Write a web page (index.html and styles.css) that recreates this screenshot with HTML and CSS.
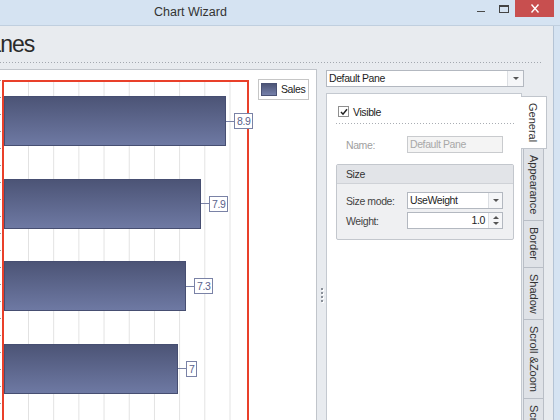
FILE: index.html
```html
<!DOCTYPE html>
<html>
<head>
<meta charset="utf-8">
<title>Chart Wizard</title>
<link rel="stylesheet" href="styles.css">
</head>
<body>
<div class="window">
  <div class="titlebar">
    <span class="title">Chart Wizard</span>
    <div class="win-controls">
      <span class="btn-min"></span>
      <span class="btn-max"></span>
      <span class="btn-close"><svg width="10" height="9" viewBox="0 0 10 9"><path d="M1.5 0.5 L8.5 8.5 M8.5 0.5 L1.5 8.5" stroke="#fff" stroke-width="1.4" fill="none"/></svg></span>
    </div>
  </div>
  <div class="frame">
    <div class="body">
      <div class="header"><h1 class="heading">Panes</h1></div>
      <div class="content">
        <div class="chart-panel">
          <div class="axis"></div>
          <div class="plot">
            <div class="bar-row"><div class="bar" style="width:222px"></div><span class="connector"></span><span class="value">8.9</span></div>
            <div class="bar-row"><div class="bar" style="width:197px"></div><span class="connector"></span><span class="value">7.9</span></div>
            <div class="bar-row"><div class="bar" style="width:182px"></div><span class="connector"></span><span class="value">7.3</span></div>
            <div class="bar-row"><div class="bar" style="width:174px"></div><span class="connector"></span><span class="value">7</span></div>
          </div>
          <div class="legend"><span class="swatch"></span><span>Sales</span></div>
        </div>
        <div class="splitter"><span class="grip"></span><span class="grip"></span><span class="grip"></span><span class="grip"></span></div>
        <div class="props">
          <div class="combo main-combo"><span class="combo-text">Default Pane</span><span class="combo-btn"><i class="arrow-down"></i></span></div>
          <div class="tabs">
            <div class="tab-page">
              <div class="check-row">
                <span class="checkbox"><svg width="8" height="8" viewBox="0 0 8 8"><path d="M1 4 L3 6.2 L7 1.2" stroke="#222" stroke-width="1.5" fill="none"/></svg></span>
                <span>Visible</span>
              </div>
              <div class="sep"></div>
              <div class="field-row name-row"><span class="field-label disabled">Name:</span><span class="textbox">Default Pane</span></div>
              <div class="group">
                <div class="group-head">Size</div>
                <div class="group-body">
                  <div class="field-row"><span class="field-label">Size mode:</span><span class="combo field"><span class="combo-text">UseWeight</span><span class="combo-btn small"><i class="arrow-down"></i></span></span></div>
                  <div class="field-row"><span class="field-label">Weight:</span><span class="combo field"><span class="combo-text num">1.0</span><span class="spin-btn"><i class="arrow-up"></i><i class="arrow-down"></i></span></span></div>
                </div>
              </div>
            </div>
            <div class="tab-strip">
              <div class="tab active">General</div>
              <div class="tab">Appearance</div>
              <div class="tab">Border</div>
              <div class="tab">Shadow</div>
              <div class="tab">Scroll &amp;Zoom</div>
              <div class="tab">Scroll Bar</div>
            </div>
          </div>
        </div>
      </div>
    </div>
  </div>
</div>
</body>
</html>
```

FILE: styles.css
```css
html, body {
  margin: 0;
  overflow: hidden;
}
body {
  font-family: "Liberation Sans", Arial, sans-serif;
  font-size: 10.5px;
  letter-spacing: -0.4px;
  color: #222;
}
.window {
  width: 560px;
  height: 530px;
  background: #d5e3f2;
  display: flex;
  flex-direction: column;
}
.titlebar {
  height: 26px;
  flex: none;
  box-sizing: border-box;
  border-bottom: 1px solid #c0cfdf;
  display: flex;
  align-items: flex-start;
}
.title {
  font-size: 12.5px;
  letter-spacing: 0;
  line-height: 15px;
  margin: 5px 0 0 154px;
  color: #333;
}
.win-controls {
  margin-left: auto;
  margin-right: 6px;
  display: flex;
  align-items: flex-start;
}
.btn-min {
  width: 8px;
  height: 1px;
  background: #4a4a4a;
  margin: 11px 14px 0 0;
}
.btn-max {
  width: 8px;
  height: 5px;
  border: 1px solid #444;
  border-top-width: 2px;
  margin: 5px 6px 0 0;
}
.btn-close {
  width: 39px;
  height: 17px;
  background: #c84f4f;
  display: flex;
  align-items: center;
  justify-content: center;
}
.frame {
  flex: 1;
  display: flex;
  min-height: 0;
  padding-right: 6px;
}
.body {
  flex: 1;
  background: #e8ebef;
  border-right: 1px solid #b4c3d5;
  display: flex;
  flex-direction: column;
  overflow: hidden;
}
.header {
  height: 37px;
  flex: none;
  margin-right: 10px;
  background: linear-gradient(to right, #a3a8af 1px, transparent 1px) left bottom / 3px 1px repeat-x;
  overflow: hidden;
}
.heading {
  margin: 0 0 0 -26px;
  font-size: 23px;
  letter-spacing: -1px;
  font-weight: normal;
  line-height: 36px;
  color: #2a2a2a;
  white-space: nowrap;
}
.content {
  flex: 1;
  display: flex;
  margin-top: 6px;
  min-height: 0;
}
.chart-panel {
  width: 317px;
  flex: none;
  box-sizing: border-box;
  background: #fff;
  border-top: 1px solid #c1c5cb;
  border-right: 1px solid #c1c5cb;
  display: flex;
  align-items: flex-start;
  padding-top: 10px;
}
.axis {
  width: 1px;
  margin-right: 1px;
  align-self: stretch;
  background: repeating-linear-gradient(to bottom, #9a9a9a 0 1px, transparent 1px 17px);
}
.plot {
  width: 247px;
  height: 460px;
  flex: none;
  box-sizing: border-box;
  border: 2px solid #e9402a;
  padding-top: 14px;
  display: flex;
  flex-direction: column;
  gap: 32.5px;
  background-image: linear-gradient(to right, #e2e2e2 1px, transparent 1px);
  background-size: 25.2px 100%;
  background-position: 24px 0;
}
.bar-row {
  display: flex;
  align-items: center;
  height: 50px;
}
.bar {
  flex: none;
  height: 50px;
  box-sizing: border-box;
  border: 1px solid #464e71;
  background: linear-gradient(#4c5476, #6e79a3);
}
.connector {
  flex: none;
  width: 8px;
  height: 1px;
  background: #7a82a6;
}
.value {
  flex: none;
  border: 1px solid #7a82a6;
  background: #fff;
  color: #5a628b;
  line-height: 14px;
  padding: 0 2px;
}
.legend {
  flex: none;
  margin: -1px 0 0 9px;
  border: 1px solid #c6c6c6;
  background: #fff;
  display: flex;
  align-items: center;
  gap: 4px;
  padding: 3px 3px 3px 2px;
  line-height: 13px;
}
.swatch {
  width: 16px;
  height: 13px;
  box-sizing: border-box;
  border: 1px solid #4a5275;
  background: linear-gradient(#4c5476, #7580aa);
}
.splitter {
  width: 9px;
  flex: none;
  display: flex;
  flex-direction: column;
  align-items: center;
  gap: 2px;
  padding-top: 219px;
}
.grip {
  width: 2px;
  height: 2px;
  background: #8a9099;
  box-shadow: 1px 1px 0 #fff;
}
.props {
  flex: 1;
  min-width: 0;
  display: flex;
  flex-direction: column;
  padding-top: 1px;
}
.combo {
  display: flex;
  box-sizing: border-box;
  height: 17px;
  border: 1px solid #b3b8c0;
  background: #fff;
}
.main-combo {
  width: 198px;
  flex: none;
}
.combo-text {
  flex: 1;
  min-width: 0;
  padding-left: 2px;
  line-height: 15px;
  white-space: nowrap;
  overflow: hidden;
  color: #1e1e1e;
}
.combo-text.num {
  text-align: right;
  padding-right: 3px;
}
.combo-btn {
  width: 15px;
  flex: none;
  display: flex;
  align-items: center;
  justify-content: center;
  border-left: 1px solid #dcdfe3;
  background: #f5f6f8;
}
.combo-btn.small {
  width: 13px;
}
.spin-btn {
  width: 13px;
  flex: none;
  display: flex;
  flex-direction: column;
  align-items: center;
  justify-content: center;
  gap: 3px;
  border-left: 1px solid #dcdfe3;
  background: #f5f6f8;
}
.arrow-down {
  width: 0;
  height: 0;
  border-left: 3px solid transparent;
  border-right: 3px solid transparent;
  border-top: 3px solid #555;
}
.arrow-up {
  width: 0;
  height: 0;
  border-left: 3px solid transparent;
  border-right: 3px solid transparent;
  border-bottom: 3px solid #555;
}
.tabs {
  display: flex;
  margin-top: 6px;
  flex: 1;
  min-height: 0;
}
.tab-page {
  width: 196px;
  flex: none;
  box-sizing: border-box;
  background: #fff;
  border: 1px solid #c4c9d0;
  padding: 11px 7px 0 9px;
}
.check-row {
  display: flex;
  align-items: center;
  gap: 4px;
  height: 13px;
  margin-left: 2px;
}
.checkbox {
  width: 11px;
  height: 11px;
  box-sizing: border-box;
  border: 1px solid #8f8f8f;
  background: #fff;
  display: flex;
  align-items: center;
  justify-content: center;
}
.sep {
  margin-top: 5px;
  height: 1px;
  background: linear-gradient(to right, #a9adb3 1px, transparent 1px) 0 0 / 3px 1px repeat-x;
}
.field-row {
  display: flex;
  align-items: center;
  height: 17px;
}
.name-row {
  margin: 12px 0 0 10px;
}
.field-label {
  width: 61px;
  flex: none;
  color: #444;
}
.field-label.disabled {
  color: #a0a0a0;
}
.textbox {
  width: 96px;
  height: 17px;
  box-sizing: border-box;
  border: 1px solid #c9cbce;
  background: #f4f4f4;
  color: #a8a8a8;
  padding-left: 2px;
  line-height: 15px;
}
.group {
  margin-top: 11px;
  border: 1px solid #c3c7cd;
  border-radius: 2px;
  background: #eff0f2;
}
.group-head {
  height: 18px;
  line-height: 18px;
  padding-left: 9px;
  background: #e2e4e8;
  border-bottom: 1px solid #cfd2d7;
  color: #333;
}
.group-body {
  padding: 8px 9px 10px;
  display: flex;
  flex-direction: column;
  gap: 3px;
}
.field {
  width: 96px;
  flex: none;
}
.tab-strip {
  display: flex;
  flex-direction: column;
  align-items: flex-start;
  margin-top: 3px;
}
.tab {
  writing-mode: vertical-rl;
  font-size: 11px;
  letter-spacing: 0;
  width: 21px;
  box-sizing: border-box;
  margin-left: 1px;
  padding: 6px 0;
  line-height: 19px;
  background: #dfe2e7;
  border: 1px solid #b9bec6;
  border-top: none;
  color: #333;
  white-space: nowrap;
}
.tab.active {
  width: 26px;
  margin-left: -1px;
  line-height: 26px;
  background: #fff;
  border: 1px solid #c0c5cc;
  border-left: none;
  position: relative;
  z-index: 1;
}
```
